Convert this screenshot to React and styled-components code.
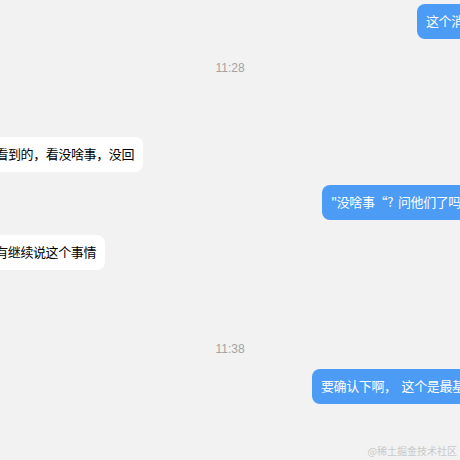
import React from 'react'
import styled, { createGlobalStyle } from 'styled-components'

const GlobalStyle = createGlobalStyle`
  html, body {
    margin: 0;
    padding: 0;
    background: #f2f2f2;
  }
  body {
    font-family: "Noto Sans CJK SC", "Noto Sans", sans-serif;
  }
`

const Screen = styled.div`
  position: relative;
  width: 460px;
  height: 460px;
  overflow: hidden;
  background: #f2f2f2;
  display: flex;
  flex-direction: column;
`

const Row = styled.div`
  display: flex;
  margin-top: ${props => props.gap || 0}px;
  justify-content: ${props => (props.side === 'left' ? 'flex-end' : 'flex-start')};
  width: ${props => (props.side === 'left' ? `${props.edge}px` : 'auto')};
  padding-left: ${props => (props.side === 'left' ? 0 : props.edge)}px;
`

const Bubble = styled.div`
  flex-shrink: 0;
  white-space: pre;
  font-size: 13px;
  line-height: 20px;
  letter-spacing: -0.4px;
  padding: 7px 9px 8px;
  border-radius: 8px;
  background: ${props => (props.mine ? '#4c9cf6' : '#ffffff')};
  color: ${props => (props.mine ? '#ffffff' : '#000000')};
`

const Time = styled.div`
  margin-top: ${props => props.gap || 0}px;
  text-align: center;
  font-family: "Liberation Sans", Arial, sans-serif;
  font-size: 12px;
  line-height: 14px;
  color: #a3a3a3;
`

const Watermark = styled.div`
  position: absolute;
  right: 3px;
  bottom: 3px;
  font-size: 10px;
  line-height: 12px;
  color: #c9c9c9;
`

const messages = [
  { type: 'msg', side: 'right', edge: 417, gap: 4, text: '这个消息他们看到了没有呀' },
  { type: 'time', gap: 22, text: '11:28' },
  { type: 'msg', side: 'left', edge: 143, gap: 62, text: '应该是看到的，看没啥事，没回' },
  { type: 'msg', side: 'right', edge: 322, gap: 13, text: '"没啥事“?  问他们了吗' },
  { type: 'msg', side: 'left', edge: 105, gap: 15, text: '后面没有继续说这个事情' },
  { type: 'time', gap: 72, text: '11:38' },
  { type: 'msg', side: 'right', edge: 312, gap: 13, text: '要确认下啊，  这个是最基本的流程' }
]

export default function App() {
  return (
    <>
      <GlobalStyle />
      <Screen>
        {messages.map((m, i) =>
          m.type === 'time' ? (
            <Time key={i} gap={m.gap}>{m.text}</Time>
          ) : (
            <Row key={i} side={m.side} edge={m.edge} gap={m.gap}>
              <Bubble mine={m.side === 'right'}>{m.text}</Bubble>
            </Row>
          )
        )}
        <Watermark>@稀土掘金技术社区</Watermark>
      </Screen>
    </>
  )
}
